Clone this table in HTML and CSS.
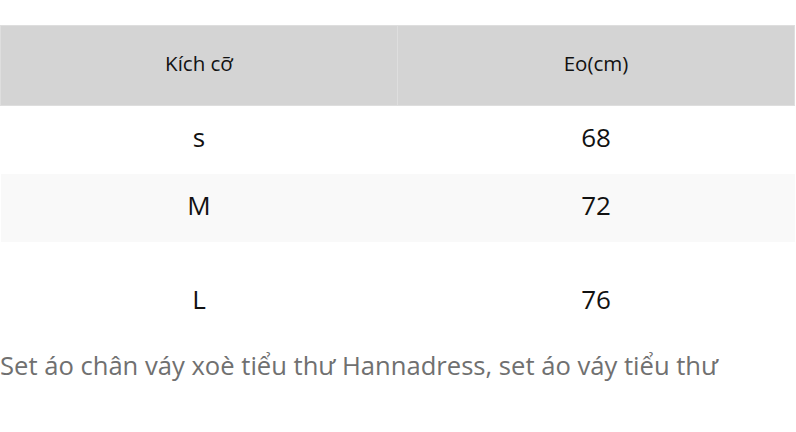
FILE: index.html
```html
<!DOCTYPE html>
<html lang="vi">
<head>
<meta charset="utf-8">
<link rel="stylesheet" href="styles.css">
</head>
<body>
<table class="size-table">
  <thead>
    <tr><th>Kích cỡ</th><th>Eo(cm)</th></tr>
  </thead>
  <tbody>
    <tr><td>s</td><td>68</td></tr>
    <tr class="alt"><td>M</td><td>72</td></tr>
    <tr class="spaced"><td>L</td><td>76</td></tr>
  </tbody>
</table>
<p class="caption">Set áo chân váy xoè tiểu thư Hannadress, set áo váy tiểu thư</p>
</body>
</html>
```
FILE: styles.css
```css
html, body {
  margin: 0;
  padding: 0;
  background: #ffffff;
  font-family: "Open Sans", "Noto Sans", sans-serif;
}
.size-table {
  margin-top: 25px;
  width: 795px;
  border-collapse: collapse;
  table-layout: fixed;
}
.size-table thead tr {
  height: 80px;
}
.size-table th {
  padding: 0 0 5px;
  background: #d4d4d4;
  border: 1px solid #dedede;
  font-weight: 400;
  font-size: 20.5px;
  color: #111;
  text-align: center;
  vertical-align: middle;
}
.size-table tbody tr {
  height: 68px;
}
.size-table td {
  padding: 0 0 5px;
  font-size: 26px;
  color: #111;
  text-align: center;
  vertical-align: middle;
}
.size-table tr.alt td {
  background: #f9f9f9;
}
.size-table tbody tr.spaced {
  height: 94px;
}
.size-table tr.spaced td {
  padding-top: 26px;
}
.caption {
  margin: 12px 0 0;
  font-size: 25.6px;
  line-height: 36px;
  color: #707070;
}
```
